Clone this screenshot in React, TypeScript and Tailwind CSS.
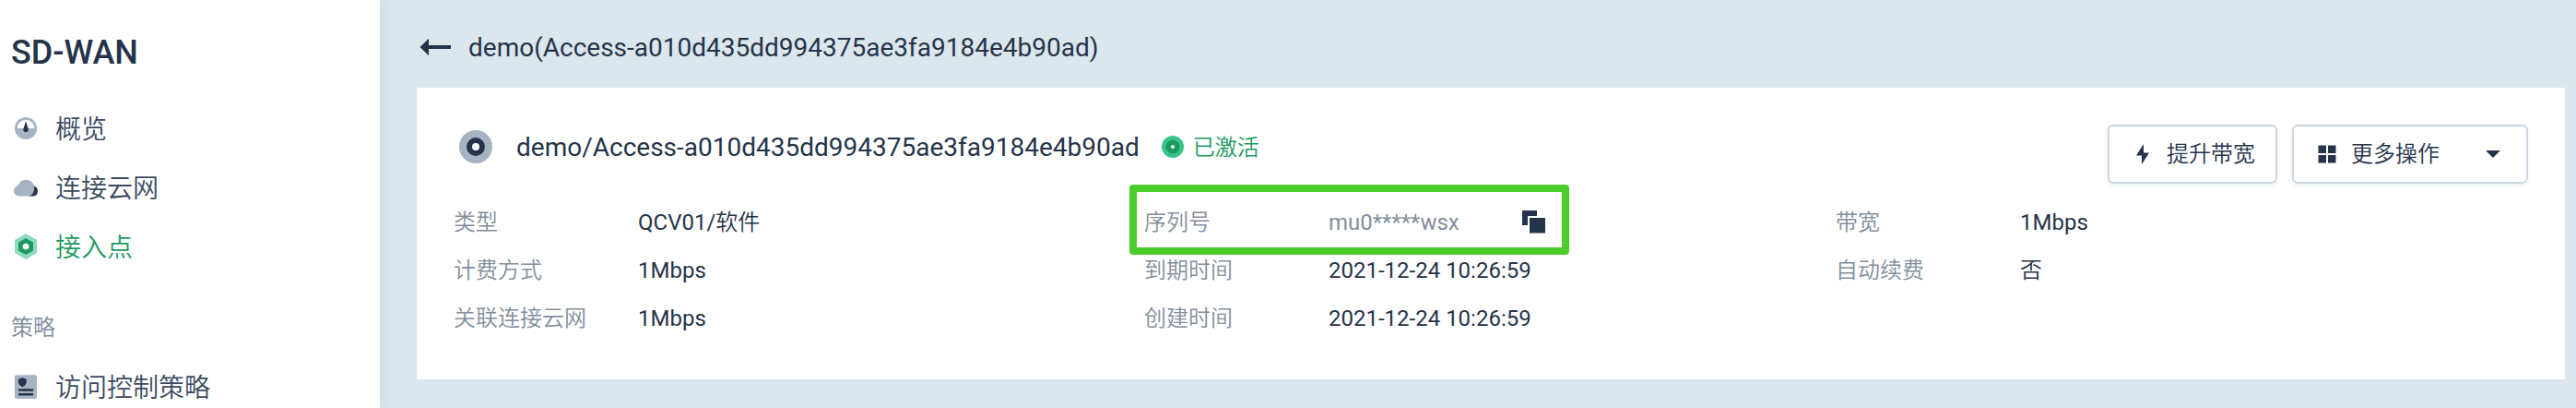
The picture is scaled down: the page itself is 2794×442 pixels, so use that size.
import type { ReactNode } from "react";

const OverviewIcon = () => (
  <svg width="32" height="32" viewBox="0 0 32 32">
    <circle cx="16" cy="16" r="12" fill="#a6b4c2" />
    <path d="M6.7 16a9.3 9.3 0 0 1 18.6 0z" fill="#fff" />
    <path d="M16 8.2l2.7 8.6a2.8 2.8 0 1 1-5.4 0z" fill="#25344a" />
  </svg>
);

const CloudIcon = () => (
  <svg width="32" height="32" viewBox="0 0 32 32">
    <path d="M24.5 14.5a5.6 5.6 0 0 1-.4 11H19V16z" fill="#25344a" />
    <path
      d="M8.6 25.5a5.7 5.7 0 0 1-1.1-11.3 8.9 8.9 0 0 1 17.2.2c1.6 5.200-1.400 11.100-6.400 11.100z"
      fill="#a6b4c2"
    />
  </svg>
);

const AccessIcon = () => (
  <svg width="32" height="32" viewBox="0 0 32 32">
    <path d="M16 2l12 7v14l-12 7-12-7V9z" fill="#8edabf" />
    <path d="M16 7l8 4.600v8.800L16 25l-8-4.600v-8.800z" fill="#1a9a60" />
    <path d="M16 12.300l3.300 1.900v3.700L16 19.800l-3.300-1.900v-3.700z" fill="#fff" />
  </svg>
);

const PolicyIcon = () => (
  <svg width="32" height="32" viewBox="0 0 32 32">
    <rect x="4" y="3.300" width="24" height="25.600" rx="2" fill="#a6b4c2" />
    <path d="M12.300 6.200l4.400 1.500v3.600c0 2.300-2.300 4-4.400 4.900-2.100-.9-4.400-2.600-4.400-4.900V7.700z" fill="#25344a" />
    <path d="M8 18.200h16v2.600H8zM8 23h16v2.600H8z" fill="#25344a" />
  </svg>
);

const NavItem = ({ icon, label, active }: { icon: ReactNode; label: string; active?: boolean }) => (
  <a
    className={`flex h-16 items-center gap-4 pl-3 text-[28px] leading-[62px] ${
      active ? "text-[#1a9a60]" : "text-[#3b4a60]"
    }`}
  >
    {icon}
    <span className="pt-[3px] font-[350]">{label}</span>
  </a>
);

const Field = ({ label, children }: { label: string; children: ReactNode }) => (
  <div className="flex h-[52px] items-center">
    <dt className="w-[200px] pt-px font-[350] text-[#828e9c]">{label}</dt>
    <dd className="flex items-center pt-px text-[#25344a]">{children}</dd>
  </div>
);

export default function App() {
  return (
    <div className="flex h-[442px] w-[2794px] overflow-hidden bg-[#dce6ed] font-['Roboto','Noto_Sans_CJK_SC',sans-serif] text-[#25344a]">
      <aside className="z-10 w-[412px] shrink-0 bg-white shadow-[0_0_16px_rgba(50,70,95,0.12)]">
        <h1 className="ml-3 h-[107px] pt-[35px] text-4xl leading-[45px] font-medium">SD-WAN</h1>
        <nav>
          <NavItem icon={<OverviewIcon />} label="概览" />
          <NavItem icon={<CloudIcon />} label="连接云网" />
          <NavItem icon={<AccessIcon />} label="接入点" active />
          <div className="mt-[32px] ml-3 h-[56px] text-2xl leading-[48px] font-[350] text-[#828e9c]">策略</div>
          <NavItem icon={<PolicyIcon />} label="访问控制策略" />
        </nav>
      </aside>

      <main className="flex-1 pl-10">
        <header className="flex h-[95px] items-center gap-[19px] pl-[3px] text-[28px]">
          <svg width="34" height="20" viewBox="0 0 34 20" className="mt-[7px]">
            <path d="M0.500 10L10 0.700V8h24v4H10v7.300z" fill="#25344a" />
          </svg>
          <span className="mt-[9px]">demo(Access-a010d435dd994375ae3fa9184e4b90ad)</span>
        </header>

        <section className="h-[316px] w-[2330px] bg-white p-10">
          <div className="flex h-16 justify-between">
            <div className="flex h-12 items-center pl-1.5">
              <svg width="36" height="36" viewBox="0 0 36 36">
                <circle cx="18" cy="18" r="18" fill="#a6b4c2" />
                <circle cx="18" cy="18" r="7" fill="#fff" stroke="#25344a" strokeWidth="6" />
              </svg>
              <h2 className="ml-[26px] pt-0.5 text-[28px]">demo/Access-a010d435dd994375ae3fa9184e4b90ad</h2>
              <svg width="24" height="24" viewBox="0 0 24 24" className="ml-6">
                <circle cx="12" cy="12" r="12" fill="#3cc38c" />
                <circle cx="12" cy="12" r="4.800" fill="#fff" stroke="#1a9a60" strokeWidth="5.400" />
              </svg>
              <span className="ml-2.5 pt-0.5 text-2xl font-[350] text-[#1a9a60]">已激活</span>
            </div>
            <div className="flex gap-4 text-2xl">
              <button className="flex h-16 w-[184px] items-center rounded-md border-2 border-[#cbd6e2] pl-[29px] shadow-[0_2px_4px_rgba(30,150,100,0.10)]">
                <svg width="14" height="22" viewBox="0 0 14 22">
                  <path d="M8 0L0 12.500h6V22l8-12.500H8z" fill="#25344a" />
                </svg>
                <span className="ml-[19px] font-[350]">提升带宽</span>
              </button>
              <button className="flex h-16 w-64 items-center rounded-md border-2 border-[#cbd6e2] pl-[26px] shadow-[0_2px_4px_rgba(30,150,100,0.10)]">
                <svg width="20" height="20" viewBox="0 0 20 20">
                  <path d="M.5.500h8.500v8.500H.5zM11 .5h8.500v8.500H11zM.5 11h8.500v8.500H.5zM11 11h8.500v8.500H11z" fill="#25344a" />
                </svg>
                <span className="ml-4 font-[350]">更多操作</span>
                <svg width="16" height="8" viewBox="0 0 16 8" className="ml-[50px]">
                  <path d="M0 0h16L8 8z" fill="#25344a" />
                </svg>
              </button>
            </div>
          </div>

          <dl className="mt-[15px] grid grid-cols-[749px_750px_750px] text-2xl">
            <div>
              <Field label="类型">
                QCV01/<span className="font-[350]">软件</span>
              </Field>
              <Field label="计费方式">1Mbps</Field>
              <Field label="关联连接云网">1Mbps</Field>
            </div>
            <div className="relative">
              <Field label="序列号">
                <span className="w-[210px] text-[#828e9c]">mu0*****wsx</span>
                <svg width="25" height="25" viewBox="0 0 25 25">
                  <path d="M0 0h16v6H6v10H0z" fill="#25344a" />
                  <path d="M8 8h17v16.500H8z" fill="#25344a" />
                </svg>
              </Field>
              <Field label="到期时间">2021-12-24 10:26:59</Field>
              <Field label="创建时间">2021-12-24 10:26:59</Field>
              <div className="absolute -top-3.5 -left-4 h-[76px] w-[477px] rounded border-8 border-[#4bcd2c]" />
            </div>
            <div>
              <Field label="带宽">1Mbps</Field>
              <Field label="自动续费">
                <span className="font-[350]">否</span>
              </Field>
            </div>
          </dl>
        </section>
      </main>
    </div>
  );
}
